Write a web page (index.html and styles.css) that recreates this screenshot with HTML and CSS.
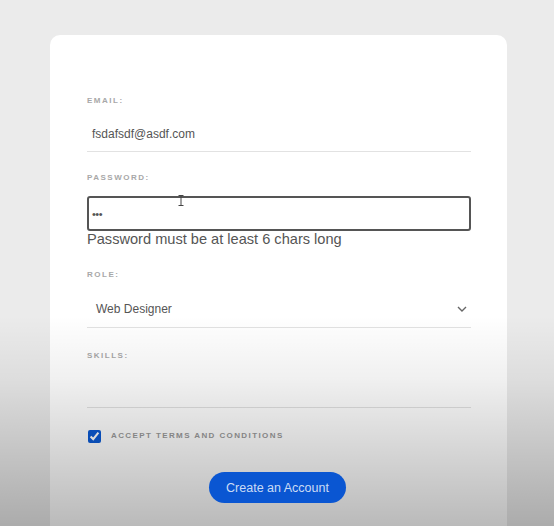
FILE: index.html
```html
<!DOCTYPE html>
<html>
<head>
<meta charset="utf-8">
<link rel="stylesheet" href="styles.css">
</head>
<body>
<div class="page">
  <form class="card">
    <div class="field">
      <label class="label">Email:</label>
      <div class="input line">fsdafsdf@asdf.com</div>
    </div>
    <div class="field">
      <label class="label">Password:</label>
      <div class="input boxed">&bull;&bull;&bull;</div>
      <div class="error">Password must be at least 6 chars long</div>
    </div>
    <div class="field field-role">
      <label class="label">Role:</label>
      <div class="input line select">
        <span>Web Designer</span>
        <svg class="chev" width="10" height="6" viewBox="0 0 10 6"><path d="M1 1 L5 5 L9 1" fill="none" stroke="#666" stroke-width="1.4"/></svg>
      </div>
    </div>
    <div class="field field-skills">
      <label class="label">Skills:</label>
      <div class="input line"></div>
    </div>
    <div class="terms">
      <input type="checkbox" class="check" checked>
      <span class="label terms-label">Accept terms and conditions</span>
    </div>
    <div class="actions">
      <button type="button" class="btn">Create an Account</button>
    </div>
  </form>
  <svg class="cursor" width="6" height="11" viewBox="0 0 6 11"><path d="M0.5 0.5 H5.5 M3 0.5 V10.5 M0.5 10.5 H5.5" stroke="#444" stroke-width="1" fill="none"/></svg>
  <div class="shade"></div>
</div>
</body>
</html>
```

FILE: styles.css
```css
html, body {
  margin: 0;
  padding: 0;
  height: 100%;
  overflow: hidden;
}
body {
  background: #ebebeb;
  font-family: "Liberation Sans", Arial, sans-serif;
}
.page {
  position: relative;
  height: 526px;
  padding-top: 35px;
  box-sizing: border-box;
  overflow: hidden;
}
.card {
  margin-left: 50px;
  width: 457px;
  height: 491px;
  box-sizing: border-box;
  background: #fff;
  border-radius: 10px 10px 0 0;
  padding: 60px 36px 0 37px;
  display: flex;
  flex-direction: column;
}
.field {
  display: flex;
  flex-direction: column;
  margin-bottom: 20px;
}
.label {
  display: block;
  font-size: 8px;
  line-height: 12px;
  font-weight: bold;
  letter-spacing: 1.5px;
  text-transform: uppercase;
  color: #a8a8a8;
}
.input {
  margin-top: 10px;
  height: 35px;
  box-sizing: border-box;
  font-size: 12px;
  color: #555;
  display: flex;
  align-items: center;
  padding-left: 5px;
}
.line {
  border-bottom: 1px solid #e2e2e2;
}
.boxed {
  margin-top: 12px;
  border: 2px solid #555;
  border-radius: 3px;
  padding-left: 3px;
  font-size: 11px;
  letter-spacing: -0.5px;
}
.error {
  font-size: 14.6px;
  line-height: 18px;
  color: #555;
  margin-top: -1px;
}
.field-role .input {
  height: 37px;
  padding-left: 9px;
  padding-right: 4px;
  justify-content: space-between;
}
.field-role {
  margin-top: 1px;
}
.field-skills {
  margin-top: 2px;
  margin-bottom: 22px;
}
.field-skills .input {
  height: 36px;
}
.terms {
  display: flex;
  align-items: center;
  height: 12px;
  gap: 10px;
}
.check {
  margin: 0 0 0 1px;
  width: 13px;
  height: 13px;
  accent-color: #0b5ad4;
}
.terms-label {
  color: #9a9a9a;
  letter-spacing: 1.4px;
}
.actions {
  position: relative;
  z-index: 2;
  display: flex;
  justify-content: center;
  margin-top: 30px;
  padding-right: 3px;
}
.btn {
  width: 137px;
  height: 31px;
  border: none;
  border-radius: 16px;
  background: #0a56d2;
  color: rgba(255, 255, 255, 0.8);
  font-family: "Liberation Sans", Arial, sans-serif;
  font-size: 12.5px;
  padding: 0;
}
.cursor {
  position: absolute;
  left: 178px;
  top: 195px;
}
.shade {
  position: absolute;
  left: 0;
  top: 0;
  right: 0;
  bottom: 0;
  pointer-events: none;
  z-index: 1;
  background: linear-gradient(to bottom, rgba(0,0,0,0) 0%, rgba(0,0,0,0) 60%, rgba(0,0,0,0.06) 72%, rgba(0,0,0,0.27) 100%);
}
```
